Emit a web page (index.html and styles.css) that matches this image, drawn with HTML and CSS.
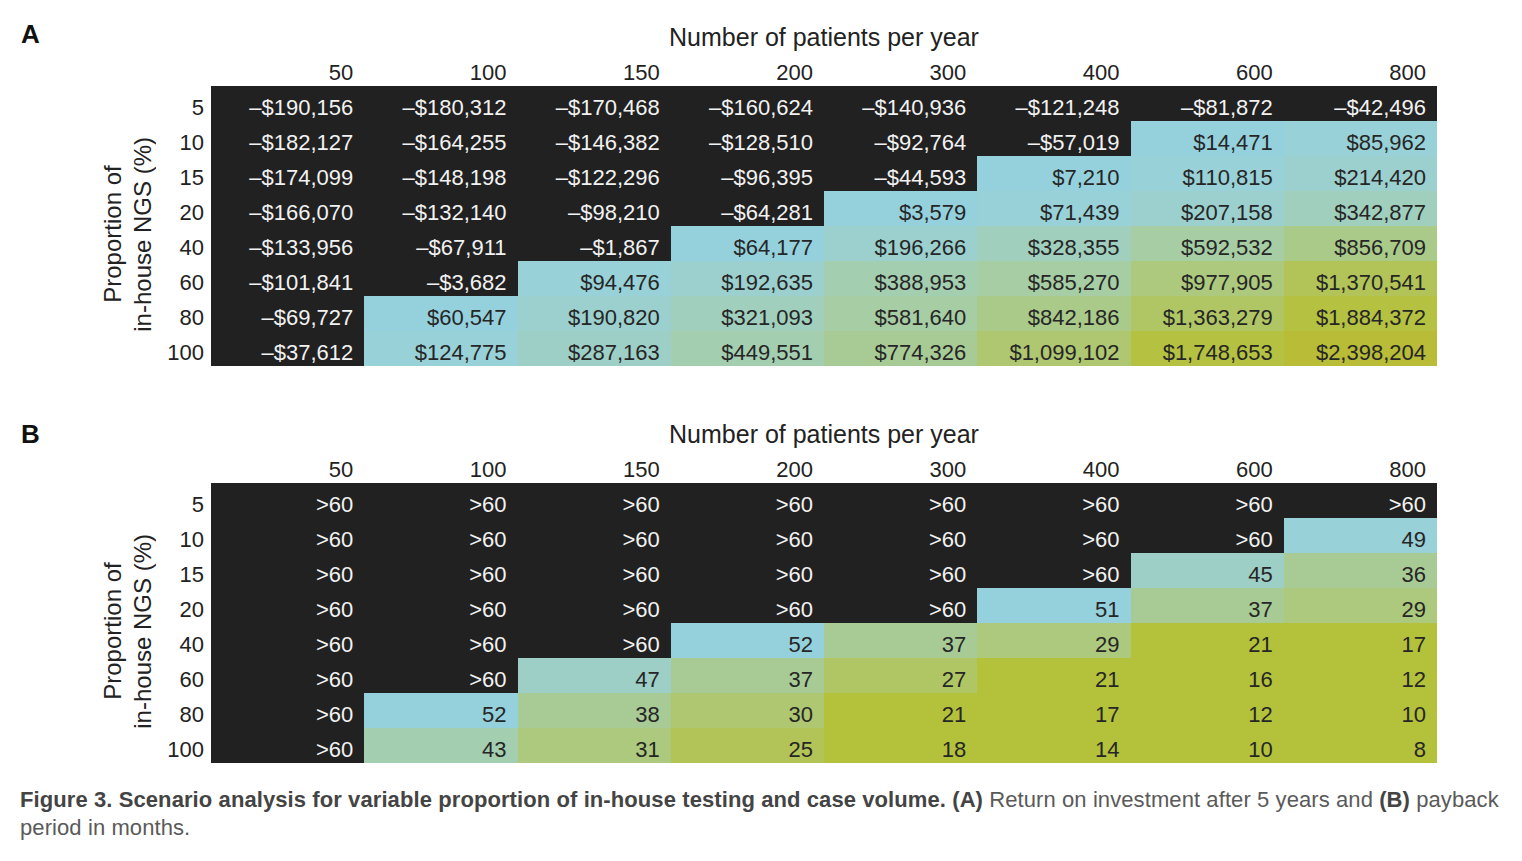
FILE: index.html
```html
<!DOCTYPE html>
<html lang="en">
<head>
<meta charset="utf-8">
<title>Figure 3</title>
<link rel="stylesheet" href="styles.css">
</head>
<body>
<div class="fig">
  <section class="panel">
    <div class="letter">A</div>
    <div class="title">Number of patients per year</div>
    <div class="spacer"></div>
    <div class="colh">50</div><div class="colh">100</div><div class="colh">150</div><div class="colh">200</div><div class="colh">300</div><div class="colh">400</div><div class="colh">600</div><div class="colh">800</div>
    <div class="ylabel">Proportion of<br>in-house NGS (%)</div>

    <div class="rowh">5</div>
    <div class="c d">–$190,156</div><div class="c d">–$180,312</div><div class="c d">–$170,468</div><div class="c d">–$160,624</div><div class="c d">–$140,936</div><div class="c d">–$121,248</div><div class="c d">–$81,872</div><div class="c d">–$42,496</div>

    <div class="rowh">10</div>
    <div class="c d">–$182,127</div><div class="c d">–$164,255</div><div class="c d">–$146,382</div><div class="c d">–$128,510</div><div class="c d">–$92,764</div><div class="c d">–$57,019</div><div class="c l0">$14,471</div><div class="c l1">$85,962</div>

    <div class="rowh">15</div>
    <div class="c d">–$174,099</div><div class="c d">–$148,198</div><div class="c d">–$122,296</div><div class="c d">–$96,395</div><div class="c d">–$44,593</div><div class="c l0">$7,210</div><div class="c l1">$110,815</div><div class="c l2">$214,420</div>

    <div class="rowh">20</div>
    <div class="c d">–$166,070</div><div class="c d">–$132,140</div><div class="c d">–$98,210</div><div class="c d">–$64,281</div><div class="c l0">$3,579</div><div class="c l1">$71,439</div><div class="c l2">$207,158</div><div class="c l4">$342,877</div>

    <div class="rowh">40</div>
    <div class="c d">–$133,956</div><div class="c d">–$67,911</div><div class="c d">–$1,867</div><div class="c l0">$64,177</div><div class="c l2">$196,266</div><div class="c l4">$328,355</div><div class="c l6">$592,532</div><div class="c l8">$856,709</div>

    <div class="rowh">60</div>
    <div class="c d">–$101,841</div><div class="c d">–$3,682</div><div class="c l1">$94,476</div><div class="c l2">$192,635</div><div class="c l5">$388,953</div><div class="c l6">$585,270</div><div class="c l9">$977,905</div><div class="c l12">$1,370,541</div>

    <div class="rowh">80</div>
    <div class="c d">–$69,727</div><div class="c l0">$60,547</div><div class="c l2">$190,820</div><div class="c l4">$321,093</div><div class="c l6">$581,640</div><div class="c l8">$842,186</div><div class="c l11">$1,363,279</div><div class="c l14">$1,884,372</div>

    <div class="rowh">100</div>
    <div class="c d">–$37,612</div><div class="c l1">$124,775</div><div class="c l3">$287,163</div><div class="c l5">$449,551</div><div class="c l7">$774,326</div><div class="c l10">$1,099,102</div><div class="c l14">$1,748,653</div><div class="c l16">$2,398,204</div>
  </section>

  <section class="panel panel-b">
    <div class="letter">B</div>
    <div class="title">Number of patients per year</div>
    <div class="spacer"></div>
    <div class="colh">50</div><div class="colh">100</div><div class="colh">150</div><div class="colh">200</div><div class="colh">300</div><div class="colh">400</div><div class="colh">600</div><div class="colh">800</div>
    <div class="ylabel">Proportion of<br>in-house NGS (%)</div>

    <div class="rowh">5</div>
    <div class="c d">&gt;60</div><div class="c d">&gt;60</div><div class="c d">&gt;60</div><div class="c d">&gt;60</div><div class="c d">&gt;60</div><div class="c d">&gt;60</div><div class="c d">&gt;60</div><div class="c d">&gt;60</div>

    <div class="rowh">10</div>
    <div class="c d">&gt;60</div><div class="c d">&gt;60</div><div class="c d">&gt;60</div><div class="c d">&gt;60</div><div class="c d">&gt;60</div><div class="c d">&gt;60</div><div class="c d">&gt;60</div><div class="c l1">49</div>

    <div class="rowh">15</div>
    <div class="c d">&gt;60</div><div class="c d">&gt;60</div><div class="c d">&gt;60</div><div class="c d">&gt;60</div><div class="c d">&gt;60</div><div class="c d">&gt;60</div><div class="c l3">45</div><div class="c l7">36</div>

    <div class="rowh">20</div>
    <div class="c d">&gt;60</div><div class="c d">&gt;60</div><div class="c d">&gt;60</div><div class="c d">&gt;60</div><div class="c d">&gt;60</div><div class="c l0">51</div><div class="c l7">37</div><div class="c l9">29</div>

    <div class="rowh">40</div>
    <div class="c d">&gt;60</div><div class="c d">&gt;60</div><div class="c d">&gt;60</div><div class="c l0">52</div><div class="c l7">37</div><div class="c l9">29</div><div class="c l15">21</div><div class="c l15">17</div>

    <div class="rowh">60</div>
    <div class="c d">&gt;60</div><div class="c d">&gt;60</div><div class="c l3">47</div><div class="c l7">37</div><div class="c l11">27</div><div class="c l15">21</div><div class="c l15">16</div><div class="c l15">12</div>

    <div class="rowh">80</div>
    <div class="c d">&gt;60</div><div class="c l0">52</div><div class="c l7">38</div><div class="c l10">30</div><div class="c l15">21</div><div class="c l15">17</div><div class="c l15">12</div><div class="c l15">10</div>

    <div class="rowh">100</div>
    <div class="c d">&gt;60</div><div class="c l5">43</div><div class="c l9">31</div><div class="c l12">25</div><div class="c l15">18</div><div class="c l15">14</div><div class="c l15">10</div><div class="c l15">8</div>
  </section>

  <p class="caption"><b>Figure 3. Scenario analysis for variable proportion of in-house testing and case volume. (A)</b> Return on investment after 5 years and <b>(B)</b> payback period in months.</p>
</div>
</body>
</html>
```

FILE: styles.css
```css
html, body {
  margin: 0;
  padding: 0;
  background: #ffffff;
}

body {
  font-family: "Liberation Sans", Arial, Helvetica, sans-serif;
  color: #222222;
}

.fig {
  width: 1522px;
  padding-top: 22px;
}

.panel {
  display: grid;
  width: 1437px;
  grid-template-columns: 160px 51px repeat(8, 1fr);
  grid-template-rows: 30px 34px repeat(8, 35px);
}

.panel-b {
  margin-top: 53px;
}

.letter {
  grid-column: 1 / span 2;
  grid-row: 1;
  align-self: start;
  padding-left: 21px;
  font-size: 26px;
  line-height: 24px;
  font-weight: 700;
  color: #111111;
}

.panel-b .letter {
  padding-top: 3px;
}

.title {
  grid-column: 3 / span 8;
  grid-row: 1;
  text-align: center;
  font-size: 25px;
  line-height: 30px;
  color: #222222;
}

.spacer {
  grid-column: 1 / span 2;
  grid-row: 2;
}

.colh {
  grid-row: 2;
  align-self: end;
  text-align: right;
  padding-right: 11px;
  font-size: 22px;
  line-height: 26px;
  color: #222222;
}

.ylabel {
  grid-column: 1;
  grid-row: 3 / span 8;
  justify-self: end;
  align-self: center;
  margin-top: 16px;
  margin-right: 2px;
  writing-mode: vertical-rl;
  transform: rotate(180deg);
  text-align: center;
  font-size: 24px;
  line-height: 30px;
  color: #222222;
  white-space: nowrap;
}

.rowh {
  grid-column: 2;
  text-align: right;
  padding-right: 7px;
  padding-top: 8px;
  font-size: 22px;
  line-height: 27px;
  color: #222222;
}

.c {
  text-align: right;
  padding-right: 11px;
  padding-top: 8px;
  font-size: 22px;
  line-height: 27px;
  color: #262626;
}

.c.d {
  background: #212121;
  color: #f2f2f2;
}

.l0 { background: #95d1dd; }
.l1 { background: #98d1d7; }
.l2 { background: #9bd0cf; }
.l3 { background: #9ecfc6; }
.l4 { background: #a1cfbd; }
.l5 { background: #a4ceb0; }
.l6 { background: #a6cda3; }
.l7 { background: #a8cb96; }
.l8 { background: #aaca8a; }
.l9 { background: #acc97d; }
.l10 { background: #aec770; }
.l11 { background: #b0c664; }
.l12 { background: #b2c457; }
.l13 { background: #b4c24b; }
.l14 { background: #b5c140; }
.l15 { background: #b4c13b; }
.l16 { background: #b8bc37; }

.caption {
  margin: 23px 0 0 0;
  padding-left: 20px;
  width: 1490px;
  font-size: 22px;
  line-height: 28px;
  letter-spacing: 0.09px;
  color: #5a5a5a;
}

.caption b {
  color: #444444;
  font-weight: 700;
}
```
